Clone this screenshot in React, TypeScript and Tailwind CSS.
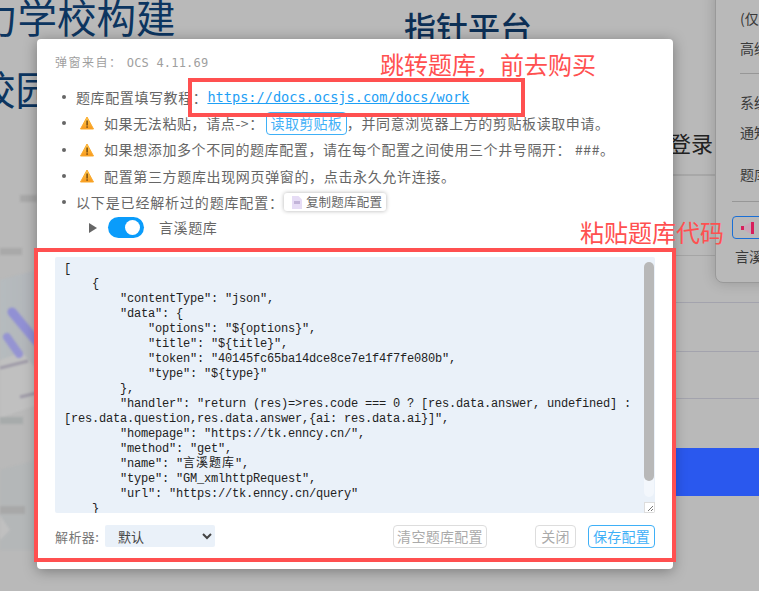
const codeBefore = `[
    {
        "contentType": "json",
        "data": {
            "options": "\${options}",
            "title": "\${title}",
            "token": "40145fc65ba14dce8ce7e1f4f7fe080b",
            "type": "\${type}"
        },
        "handler": "return (res)=>res.code === 0 ? [res.data.answer, undefined] :
[res.data.question,res.data.answer,{ai: res.data.ai}]",
        "homepage": "https://tk.enncy.cn/",
        "method": "get",
        "name": "`;
const codeAfter = `",
        "type": "GM_xmlhttpRequest",
        "url": "https://tk.enncy.cn/query"
    }`;

const cjk = "font-['Noto_Sans_CJK_SC','Liberation_Sans',sans-serif]";

function Warn() {
  return (
    <svg width="14" height="14" viewBox="0 0 14 14" className="block shrink-0">
      <defs>
        <linearGradient id="w" x1="0" y1="0" x2="0" y2="1">
          <stop offset="0" stopColor="#ffd052" />
          <stop offset="1" stopColor="#f8971c" />
        </linearGradient>
      </defs>
      <path d="M7 1 L13.5 13 L0.5 13 Z" fill="url(#w)" stroke="#f9a92d" strokeLinejoin="round" />
      <rect x="6.4" y="4.5" width="1.4" height="5" fill="#6b4310" />
      <rect x="6.4" y="10.3" width="1.4" height="1.5" fill="#6b4310" />
    </svg>
  );
}

function Item({ children }: { children: React.ReactNode }) {
  return (
    <li className="flex items-center h-[26.3px] whitespace-nowrap">
      <span className="w-[4px] h-[4px] rounded-full bg-[#666] ml-[25px] mr-[10px] shrink-0" />
      {children}
    </li>
  );
}

function Btn({ children, className }: { children: React.ReactNode; className: string }) {
  return (
    <span className={`inline-flex items-center justify-center h-[23px] rounded-[4px] border text-[14px] tracking-[0.3px] ${className}`}>
      {children}
    </span>
  );
}

function LeftArt() {
  return (
    <svg width="37" height="400" viewBox="0 0 37 400" className="absolute left-0 top-[170px] blur-[1px]">
      <defs>
        <linearGradient id="wash" x1="0" y1="0" x2="1" y2="0">
          <stop offset="0" stopColor="#b4bcc0" />
          <stop offset="1" stopColor="#aeb2b8" />
        </linearGradient>
      </defs>
      <path d="M0 110 L37 100 L37 230 L0 245Z" fill="url(#wash)" opacity="0.7" />
      <path d="M0 300 L37 290 L37 380 L0 380Z" fill="#b0b5b8" opacity="0.5" />
      <path d="M0 190 L22 182 L37 200 L37 235 L0 248Z" fill="#c0c0c0" />
      <path d="M0 345 L10 360 L0 370Z" fill="#c0c0c0" />
      <path d="M12 142 L37 172" stroke="#8b89d8" strokeWidth="9" strokeLinecap="round" opacity="0.85" />
      <path d="M7 167 L19 184" stroke="#8f8dd6" strokeWidth="8" strokeLinecap="round" opacity="0.85" />
      <path d="M0 198 L28 191" stroke="#9f9ba8" strokeWidth="3" />
      <path d="M20 227 L37 223" stroke="#9f9ba8" strokeWidth="3" />
      <rect x="20" y="25" width="17" height="7" fill="#a8a8a8" />
      <rect x="0" y="78" width="22" height="7" fill="#a9a9a9" />
      <rect x="0" y="247" width="23" height="7" fill="#a7abab" />
      <rect x="0" y="336" width="25" height="8" fill="#a8a8a8" />
    </svg>
  );
}

export default function App() {
  return (
    <div className={`relative w-[759px] h-[591px] overflow-hidden bg-[#b9b9b9] ${cjk}`}>
      {/* dimmed page behind the dialog */}
      <LeftArt />
      <div className="absolute left-[-22px] top-[-8px] text-[39.5px] leading-[48px] text-[#0c3560] whitespace-nowrap">力学校构建</div>
      <div className="absolute left-[-24px] top-[64px] text-[39.5px] leading-[48px] text-[#0c3560] whitespace-nowrap">校园</div>
      <div className="absolute left-[404px] top-[6px] text-[32px] leading-[40px] font-medium text-[#0c2f55] whitespace-nowrap">指针平台</div>
      <div className="absolute left-[669px] top-[126px] text-[22px] leading-[32px] text-[#222] whitespace-nowrap">登录</div>
      <div className="absolute left-[673px] right-0 top-[174px] h-[2px] bg-[#a8a8a8]" />
      <div className="absolute left-[673px] right-0 top-[255px] h-[1px] bg-[#a5a5a5]" />
      <div className="absolute left-[673px] right-0 top-[302px] h-[1px] bg-[#a3a3ad]" />
      <div className="absolute left-[673px] right-0 top-[351px] h-[1px] bg-[#a3a3ad]" />
      <div className="absolute left-[673px] right-0 top-[398px] h-[1px] bg-[#a3a3ad]" />
      <div className="absolute left-[673px] right-0 top-[448px] h-[48px] bg-[#2a58ee]" />

      {/* right floating panel */}
      <div className="absolute left-[715px] top-[-10px] w-[60px] h-[293px] rounded-bl-[8px] border border-[#999] bg-[#b9b9b9] shadow-[0_0_14px_rgba(0,0,0,0.18)] text-[14px] text-[#3a3a3a] whitespace-nowrap">
        <div className="pl-[24px] pt-[17px] leading-[20px]">(仅</div>
        <div className="pl-[24px] pt-[10px] leading-[20px]">高级</div>
        <div className="ml-[24px] mt-[15px] h-[1px] bg-[#979797]" />
        <div className="pl-[24px] pt-[18px] leading-[20px]">系统</div>
        <div className="pl-[24px] pt-[10px] leading-[20px]">通知</div>
        <div className="pl-[24px] pt-[22px] leading-[20px]">题库</div>
        <div className="ml-[16px] mt-[17px] h-[1px] bg-[#979797]" />
        <div className="ml-[16px] mt-[14px] h-[23px] rounded-l-[4px] border border-[#1a6fd6] flex items-center pl-[8px]">
          <svg width="16" height="12" viewBox="0 0 16 12" className="shrink-0">
            <path d="M0 4h3v4H0z" fill="#d81e5b" />
            <path d="M3 4l7-4v12L3 8z" fill="#c9a6b8" />
            <rect x="10" y="0" width="3" height="12" fill="#d81e5b" />
          </svg>
        </div>
        <div className="pl-[19px] pt-[7px] leading-[20px]">言溪</div>
      </div>

      {/* dialog */}
      <div className="absolute left-[37px] top-[39px] w-[636px] h-[530px] rounded-[4px] bg-white shadow-[0_2px_14px_rgba(0,0,0,0.35)] flex flex-col text-[#666]">
        <div className="pl-[18px] pt-[15px] h-[45px] text-[12px] leading-[16px] tracking-[1.5px] text-[#9f9f9f]">
          弹窗来自： <span className="font-['DejaVu_Sans_Mono',monospace] tracking-[0.2px]">OCS 4.11.69</span>
        </div>
        <ul className="text-[14px] tracking-[0.6px] flex flex-col">
          <Item>
            <span>题库配置填写教程：</span>
            <a className="font-['DejaVu_Sans_Mono',monospace] text-[13.6px] tracking-[0px] text-[#1ea0f5] underline">https://docs.ocsjs.com/docs/work</a>
          </Item>
          <Item>
            <span className="ml-[4px] mr-[10px]"><Warn /></span>
            <span>如果无法粘贴，请点-&gt;：</span>
            <Btn className="w-[81px] ml-[2px] border-[#3fb0f7] text-[#3fb0f7]">读取剪贴板</Btn>
            <span>，并同意浏览器上方的剪贴板读取申请。</span>
          </Item>
          <Item>
            <span className="ml-[4px] mr-[10px]"><Warn /></span>
            <span>如果想添加多个不同的题库配置，请在每个配置之间使用三个井号隔开： ###。</span>
          </Item>
          <Item>
            <span className="ml-[4px] mr-[10px]"><Warn /></span>
            <span className="tracking-[0.65px]">配置第三方题库出现网页弹窗的，点击永久允许连接。</span>
          </Item>
          <Item>
            <span className="tracking-[0.85px]">以下是已经解析过的题库配置：</span>
            <span className="w-[102px] h-[18px] rounded-[3px] bg-white shadow-[0_0_4px_rgba(0,0,0,0.3)] flex items-center pl-[8px] text-[12.5px] tracking-[0.2px] gap-[4px]">
              <svg width="10" height="13" viewBox="0 0 10 13" className="shrink-0">
                <path d="M0 0h6.5L10 3.5V13H0z" fill="#e6dcf5" />
                <rect x="2" y="5" width="6" height="3" fill="#c2b4d8" />
              </svg>
              复制题库配置
            </span>
          </Item>
        </ul>
        <div className="flex items-center pl-[52px] h-[25px] text-[14px] tracking-[0.6px]">
          <svg width="8" height="10" viewBox="0 0 8 10" className="shrink-0">
            <path d="M0 0l8 5-8 5z" fill="#666" />
          </svg>
          <span className="ml-[11px] w-[36px] h-[21px] rounded-full bg-[#0a9cfb] relative shrink-0">
            <span className="absolute right-[4px] top-[3px] w-[15px] h-[15px] rounded-full bg-white" />
          </span>
          <span className="ml-[15px]">言溪题库</span>
        </div>
        {/* editor */}
        <div className="relative mx-[18px] mt-[16.5px] h-[256px] bg-[#eaf1f9] overflow-hidden rounded-[2px]">
          <pre className="pl-[9px] pt-[5px] font-['Liberation_Mono','Noto_Sans_CJK_SC',monospace] text-[12px] tracking-[-0.2px] leading-[15px] text-[#222] whitespace-pre">{codeBefore}<span className="tracking-[1px]">言溪题库</span>{codeAfter}</pre>
          <div className="absolute right-[1px] top-[5px] w-[10px] h-[235px] rounded-[5px] bg-[#f3f7fc]">
            <div className="w-[10px] h-[219px] rounded-[5px] bg-[#b8b8b8]" />
          </div>
          <div className="absolute right-0 bottom-0 w-[11px] h-[11px] bg-white border border-[#ddd]">
            <svg width="9" height="9" viewBox="0 0 9 9" className="block">
              <path d="M3 8L8 3M6 8L8 6" stroke="#777" strokeWidth="1" />
            </svg>
          </div>
        </div>
        {/* footer */}
        <div className="flex items-center px-[18px] mt-[12px] h-[23px] text-[14px]">
          <span className="w-[50px] shrink-0 whitespace-nowrap tracking-[0.4px] text-[#777] text-[13px]">解析器:</span>
          <select defaultValue="默认" className={`w-[110px] h-[22px] rounded-[2px] bg-[#eaf1f9] pl-[9px] text-[13px] text-[#444] outline-none ${cjk}`}>
            <option>默认</option>
          </select>
          <Btn className="ml-auto w-[94px] border-[#ddd] text-[#aaa]">清空题库配置</Btn>
          <Btn className="ml-[48px] w-[41px] border-[#ddd] text-[#aaa]">关闭</Btn>
          <Btn className="ml-[12px] w-[67px] border-[#3fb0f7] text-[#3fb0f7]">保存配置</Btn>
        </div>
      </div>

      {/* red annotations over the screenshot */}
      <div className="absolute left-[188px] top-[78px] w-[337px] h-[39px] border-[4px] border-[#ff5050]" />
      <div className="absolute left-[34px] top-[248px] w-[642px] h-[314px] border-[4px] border-[#ff5050]" />
      <div className="absolute left-[380px] top-[46px] text-[24px] leading-[36px] text-[#ff5050] whitespace-nowrap">跳转题库，前去购买</div>
      <div className="absolute left-[580px] top-[214px] text-[24px] leading-[36px] text-[#ff5050] whitespace-nowrap">粘贴题库代码</div>
    </div>
  );
}
